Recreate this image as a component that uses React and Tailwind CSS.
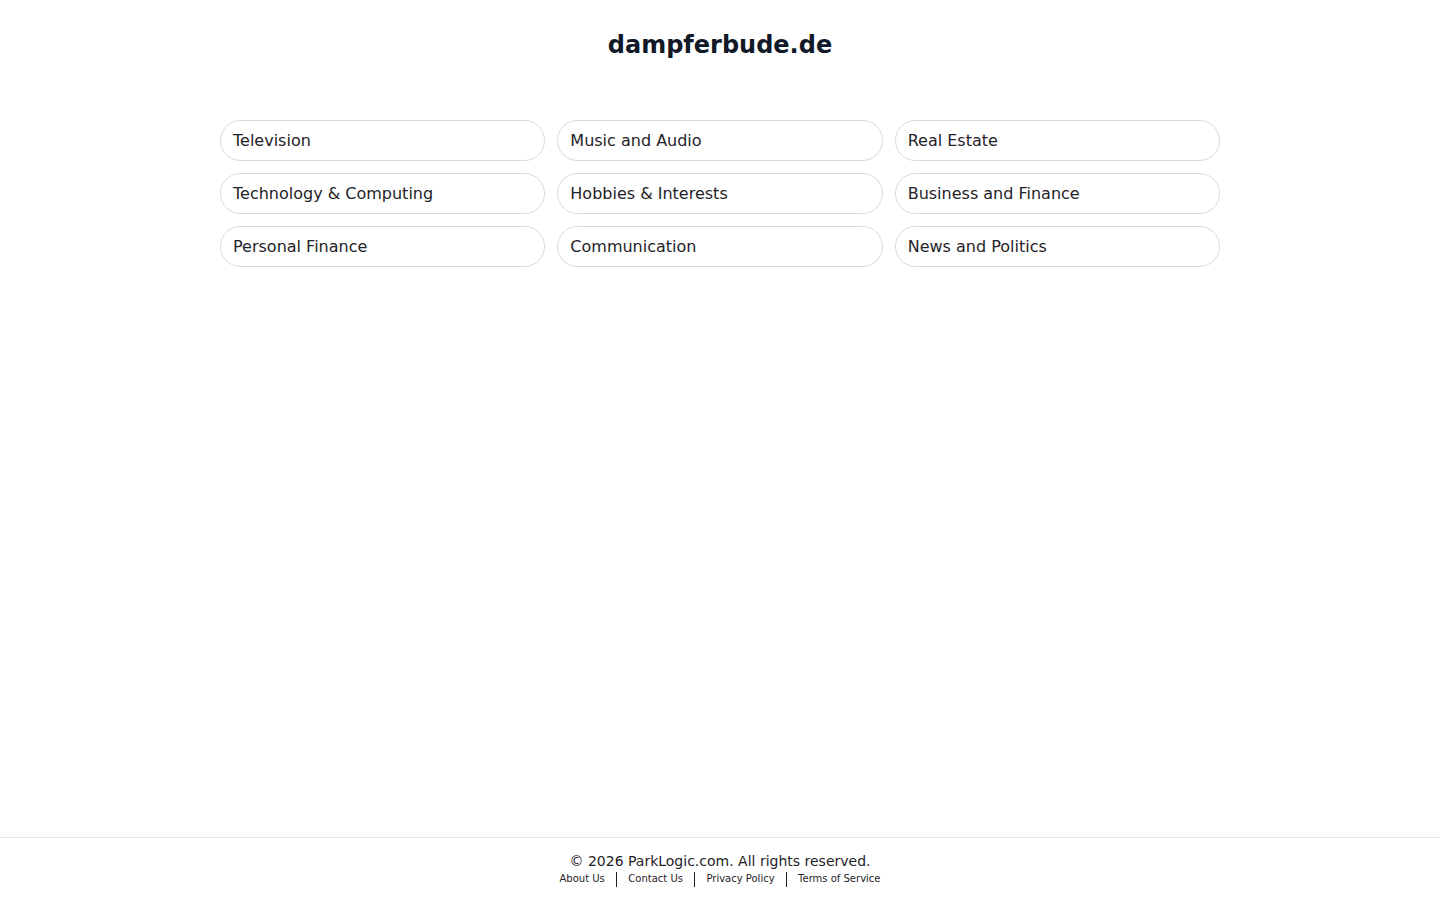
const categories = [
  'Television',
  'Music and Audio',
  'Real Estate',
  'Technology & Computing',
  'Hobbies & Interests',
  'Business and Finance',
  'Personal Finance',
  'Communication',
  'News and Politics',
];

const links = ['About Us', 'Contact Us', 'Privacy Policy', 'Terms of Service'];

export default function App() {
  return (
    <div className="flex min-h-screen flex-col bg-white font-['DejaVu_Sans',sans-serif] text-[#111827]">
      <main className="flex-1">
        <h1 className="pt-[29px] text-center text-2xl font-bold leading-8 text-[#111827]">
          dampferbude.de
        </h1>
        <div className="mx-auto mt-[59px] grid w-[1000px] grid-cols-3 gap-3">
          {categories.map((c) => (
            <a
              key={c}
              href="#"
              className="flex h-[41px] items-center rounded-full border border-[#d9d9d9] px-[12px] text-base text-[#1f2328]"
            >
              {c}
            </a>
          ))}
        </div>
      </main>
      <footer className="border-t border-[#e5e7eb] pb-[13px] pt-[13px] text-center">
        <p className="text-sm leading-5 text-[#1f2328]">© 2026 ParkLogic.com. All rights reserved.</p>
        <div className="flex items-center justify-center text-[10px] leading-4 text-[#1f2328]">
          {links.map((l, i) => (
            <span key={l} className="flex items-center">
              {i > 0 && <span className="mx-[11px] h-[15px] w-[1.5px] bg-[#1f2328]" />}
              <a href="#">{l}</a>
            </span>
          ))}
        </div>
      </footer>
    </div>
  );
}
